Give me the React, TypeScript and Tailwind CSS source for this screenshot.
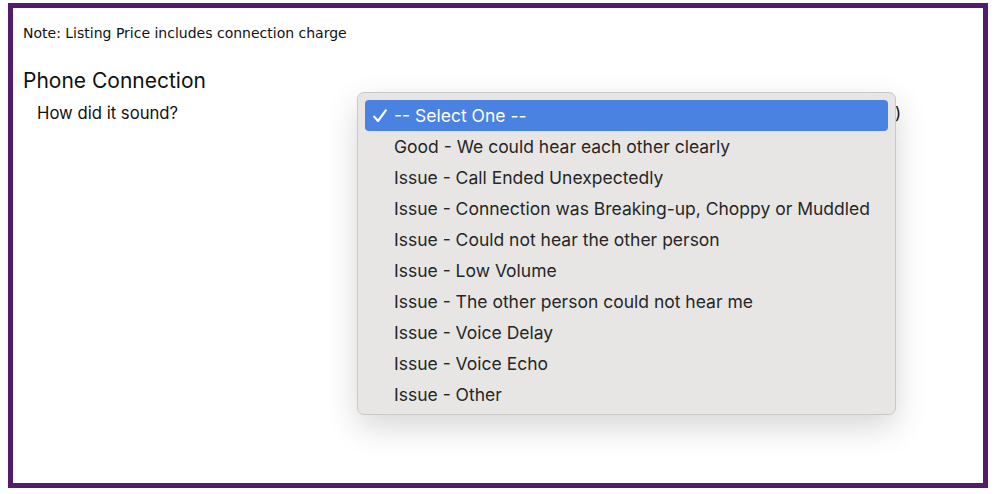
import React from "react";

const options = [
  "Good - We could hear each other clearly",
  "Issue - Call Ended Unexpectedly",
  "Issue - Connection was Breaking-up, Choppy or Muddled",
  "Issue - Could not hear the other person",
  "Issue - Low Volume",
  "Issue - The other person could not hear me",
  "Issue - Voice Delay",
  "Issue - Voice Echo",
  "Issue - Other",
];

export default function App() {
  return (
    <div className="relative w-[996px] h-[494px] bg-white overflow-hidden">
      <div className="ml-[8px] mt-[3px] w-[980px] h-[485px] border-[5px] border-[#511c6c] px-[10px] pt-[11px]">
        <p className="text-[14px] text-[#111] font-['DejaVu_Sans',sans-serif] leading-[28px]">
          Note: Listing Price includes connection charge
        </p>
        <h2 className="mt-[20px] text-[21px] text-[#111] font-['Inter',sans-serif] leading-[28px]">
          Phone Connection
        </h2>
        <div className="mt-[4px] flex items-center h-[30px] pl-[14px] pr-[72px] font-['Inter',sans-serif] text-[16.7px] text-[#111]">
          <span>How did it sound?</span>
          <span className="ml-auto">-- Select One -- (required)</span>
        </div>
      </div>

      <div className="absolute left-[357px] top-[92px] w-[539px] h-[323px] rounded-[7px] bg-[#e7e6e5] border border-[#c9c8c7] shadow-[0_12px_32px_rgba(0,0,0,0.16)] px-[7px] pt-[7px] font-['Inter',sans-serif] text-[17.5px]">
        <div className="flex items-center h-[31px] rounded-[4px] bg-[#4a82e1] text-white">
          <span className="w-[29px] pl-[8px] flex items-center">
            <svg width="14" height="14" viewBox="0 0 14 14" fill="none">
              <path d="M1.2 7.6 L5 12 L12.8 1.4" stroke="white" strokeWidth="2.2" strokeLinecap="round" strokeLinejoin="round" />
            </svg>
          </span>
          <span className="pt-[1px]">-- Select One --</span>
        </div>
        {options.map((o) => (
          <div key={o} className="flex items-center h-[31px] text-[#262626]">
            <span className="w-[29px]" />
            <span className="pt-[1px]">{o}</span>
          </div>
        ))}
      </div>
    </div>
  );
}
